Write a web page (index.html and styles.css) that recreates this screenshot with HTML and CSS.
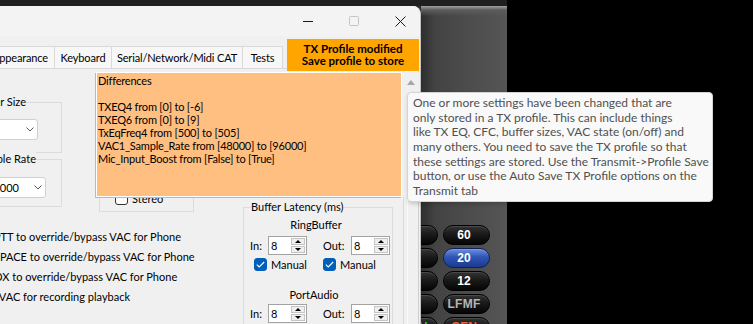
FILE: index.html
```html
<!DOCTYPE html>
<html lang="en">
<head>
    <meta charset="UTF-8">
    <meta name="viewport" content="width=device-width, initial-scale=1.0">
    <title>Setup - TX Profile modified</title>
    <link rel="stylesheet" href="styles.css">
</head>
<body>
    <div class="stage">
        <div class="topband"></div>
        <div class="desk">
            <div class="window">
                <div class="titlebar">
                    <div class="tb-btn">
                        <svg width="10" height="10" viewBox="0 0 10 10"><path d="M0 5.5H10" stroke="#1a1a1a" stroke-width="1"/></svg>
                    </div>
                    <div class="tb-btn">
                        <svg width="10" height="10" viewBox="0 0 10 10"><rect x="0.5" y="0.5" width="9" height="9" rx="1" fill="none" stroke="#c4c4c4"/></svg>
                    </div>
                    <div class="tb-btn">
                        <svg width="11" height="11" viewBox="0 0 11 11"><path d="M0.5 0.5L10.5 10.5M10.5 0.5L0.5 10.5" stroke="#1a1a1a" stroke-width="1"/></svg>
                    </div>
                </div>

                <div class="tabstrip">
                    <div class="tab tab-appearance">Appearance</div>
                    <div class="tab tab-keyboard">Keyboard</div>
                    <div class="tab tab-serial">Serial/Network/Midi CAT</div>
                    <div class="tab tab-tests">Tests</div>
                    <div class="modified">TX Profile modified<br>Save profile to store</div>
                </div>

                <div class="page">
                    <div class="left">
                        <div class="groups">
                            <div class="col-a">
                                <div class="group g-size">
                                    <span class="group-title">Buffer Size</span>
                                    <div class="combo combo-size">
                                        <span class="combo-val">2048</span>
                                        <svg class="chev" width="8" height="5" viewBox="0 0 8 5"><path d="M0.5 0.5L4 4L7.5 0.5" fill="none" stroke="#5a5a5a"/></svg>
                                    </div>
                                </div>
                                <div class="group g-rate">
                                    <span class="group-title">Sample Rate</span>
                                    <div class="combo combo-rate">
                                        <span class="combo-val">96000</span>
                                        <svg class="chev" width="8" height="5" viewBox="0 0 8 5"><path d="M0.5 0.5L4 4L7.5 0.5" fill="none" stroke="#5a5a5a"/></svg>
                                    </div>
                                </div>
                            </div>
                            <div class="group g-stereo">
                                <label class="check">
                                    <span class="box"></span>
                                    <span>Stereo</span>
                                </label>
                            </div>
                        </div>

                        <div class="checks">
                            <label class="check check-row"><span class="box"></span><span>Allow PTT to override/bypass VAC for Phone</span></label>
                            <label class="check check-row"><span class="box"></span><span>Allow SPACE to override/bypass VAC for Phone</span></label>
                            <label class="check check-row check-row-vox"><span class="box"></span><span>Allow VOX to override/bypass VAC for Phone</span></label>
                            <label class="check check-row"><span class="box"></span><span>Enable VAC for recording playback</span></label>
                        </div>
                    </div>

                    <div class="group latency">
                        <span class="group-title">Buffer Latency (ms)</span>
                        <div class="lat-sub">RingBuffer</div>
                        <div class="spin-row">
                            <span class="spin-label">In:</span>
                            <div class="spin"><span class="spin-val">8</span><span class="spin-btns"><span class="spin-up"></span><span class="spin-dn"></span></span></div>
                            <span class="spin-label spin-label-out">Out:</span>
                            <div class="spin"><span class="spin-val">8</span><span class="spin-btns"><span class="spin-up"></span><span class="spin-dn"></span></span></div>
                        </div>
                        <div class="manual-row">
                            <label class="check manual">
                                <span class="box box-on"><svg width="9" height="7" viewBox="0 0 9 7"><path d="M0.8 3.6L3.2 6L8.2 1" fill="none" stroke="#fff" stroke-width="1.1"/></svg></span>
                                <span>Manual</span>
                            </label>
                            <label class="check manual">
                                <span class="box box-on"><svg width="9" height="7" viewBox="0 0 9 7"><path d="M0.8 3.6L3.2 6L8.2 1" fill="none" stroke="#fff" stroke-width="1.1"/></svg></span>
                                <span>Manual</span>
                            </label>
                        </div>
                        <div class="lat-sub lat-sub-pa">PortAudio</div>
                        <div class="spin-row spin-row-pa">
                            <span class="spin-label">In:</span>
                            <div class="spin"><span class="spin-val">8</span><span class="spin-btns"><span class="spin-up"></span><span class="spin-dn"></span></span></div>
                            <span class="spin-label spin-label-out">Out:</span>
                            <div class="spin"><span class="spin-val">8</span><span class="spin-btns"><span class="spin-up"></span><span class="spin-dn"></span></span></div>
                        </div>
                    </div>

                    <div class="rstrip"><div class="rstrip-inner"></div></div>
                </div>
            </div>

            <div class="bandpanel">
                <div class="bands">
                    <div class="band band-o">80</div><div class="band">60</div>
                    <div class="band band-o">30</div><div class="band band-on">20</div>
                    <div class="band band-o">15</div><div class="band">12</div>
                    <div class="band band-o">6</div><div class="band band-grey">LFMF</div>
                    <div class="band band-g">WWV</div><div class="band band-r">GEN</div>
                </div>
            </div>
        </div>

        <div class="diff">
            <div class="diff-text">
                Differences<br>
                <br>
                TXEQ4 from [0] to [-6]<br>
                TXEQ6 from [0] to [9]<br>
                TxEqFreq4 from [500] to [505]<br>
                VAC1_Sample_Rate from [48000] to [96000]<br>
                Mic_Input_Boost from [False] to [True]
            </div>
            <div class="diff-scroll"><span class="arrow-up"></span></div>
        </div>

        <div class="tip">
            One or more settings have been changed that are<br>
            only stored in a TX profile. This can include things<br>
            like TX EQ, CFC, buffer sizes, VAC state (on/off) and<br>
            many others. You need to save the TX profile so that<br>
            these settings are stored. Use the Transmit-&gt;Profile Save<br>
            button, or use the Auto Save TX Profile options on the<br>
            Transmit tab
        </div>
    </div>
</body>
</html>
```

FILE: styles.css
```css
* {
    margin: 0;
    padding: 0;
    box-sizing: border-box;
}

body {
    background: #000;
    font-family: Lato, "Liberation Sans", sans-serif;
    font-size: 11px;
    color: #000;
}

.stage {
    position: relative;
    width: 753px;
    height: 324px;
    overflow: hidden;
}

.topband {
    width: 507px;
    height: 6px;
    background: #1f1f1f;
}

.desk {
    display: flex;
    width: 507px;
    height: 318px;
    background: #2a2a2a;
}

/* dialog window */
.window {
    width: 421px;
    height: 318px;
    flex-shrink: 0;
    display: flex;
    flex-direction: column;
    background: #f0f0f0;
    border-right: 1px solid #c2c2c2;
    border-top-right-radius: 8px;
    overflow: hidden;
}

.titlebar {
    height: 30px;
    flex-shrink: 0;
    display: flex;
    justify-content: flex-end;
    margin-right: -3px;
    background: #f3f3f3;
}

.tb-btn {
    width: 46px;
    display: flex;
    align-items: center;
    justify-content: center;
}

.tabstrip {
    height: 33px;
    flex-shrink: 0;
    display: flex;
    align-items: flex-end;
    border-bottom: 1px solid #d9d9d9;
}

.tab {
    height: 22px;
    display: flex;
    align-items: center;
    justify-content: center;
    flex-shrink: 0;
    white-space: nowrap;
    letter-spacing: -0.15px;
    background: #f7f7f7;
    border-top: 1px solid #d9d9d9;
    border-right: 1px solid #d9d9d9;
}

.tab-appearance { width: 69px; margin-left: -14px; }
.tab-keyboard { width: 57px; }
.tab-serial { width: 131px; }
.tab-tests { width: 40px; }

.modified {
    position: relative;
    z-index: 1;
    align-self: flex-start;
    flex-shrink: 0;
    width: 132px;
    height: 32px;
    margin: 3px 0 0 4px;
    display: flex;
    flex-direction: column;
    justify-content: center;
    text-align: center;
    font-size: 11.5px;
    line-height: 12.5px;
    font-weight: 700;
    background: #ffa500;
}

/* tab page */
.page {
    flex: 1;
    display: flex;
}

.left {
    width: 243px;
    flex-shrink: 0;
}

.groups {
    display: flex;
    align-items: flex-start;
    padding-top: 33px;
}

.col-a {
    width: 62px;
    flex-shrink: 0;
}

.group {
    position: relative;
    border: 1px solid #dcdcdc;
    flex-shrink: 0;
}

.group-title {
    position: absolute;
    top: -8px;
    line-height: 14px;
    white-space: nowrap;
    background: #f0f0f0;
}

.g-size {
    width: 100px;
    height: 51px;
    margin-left: -38px;
    padding: 16px 0 0 6px;
}

.g-size .group-title { right: 35px; }

.g-rate {
    width: 96px;
    height: 48px;
    margin-left: -34px;
    margin-top: 6px;
    padding: 17px 0 0 6px;
}

.g-rate .group-title { right: 25px; }

.combo {
    height: 21px;
    display: flex;
    align-items: center;
    background: #fff;
    border: 1px solid #cfcfcf;
    border-radius: 3px;
    padding: 0 3px 0 4px;
}

.combo-val {
    flex: 1;
    white-space: nowrap;
}

.combo-size { width: 69px; }
.combo-size .combo-val { visibility: hidden; }
.combo-rate { width: 73px; padding-left: 13px; }

.g-stereo {
    width: 95px;
    height: 110px;
    margin-left: 37px;
    padding: 89px 0 0 15px;
}

.check {
    display: flex;
    align-items: center;
    gap: 4px;
    white-space: nowrap;
}

.box {
    width: 13px;
    height: 13px;
    flex-shrink: 0;
    display: flex;
    align-items: center;
    justify-content: center;
    background: #fff;
    border: 1px solid #333;
    border-radius: 3px;
}

.box-on {
    background: #005fb8;
    border-color: #005fb8;
}

.checks {
    margin-top: 14px;
}

.check-row {
    height: 20px;
    margin-left: -53px;
}

.check-row-vox {
    margin-left: -60px;
}

/* buffer latency */
.latency {
    width: 150px;
    height: 140px;
    margin-top: 138px;
    padding: 8px 0 0 6px;
}

.latency .group-title { left: 7px; }

.lat-sub {
    width: 132px;
    line-height: 18px;
    text-align: center;
}

.lat-sub-pa {
    width: 128px;
    margin-top: 15px;
}

.spin-row {
    height: 19px;
    margin-top: 2px;
    display: flex;
    align-items: center;
}

.spin-row-pa {
    margin-top: 0;
}

.spin-label {
    width: 18px;
    flex-shrink: 0;
}

.spin-label-out {
    width: 28px;
    margin-left: 16px;
}

.spin {
    width: 39px;
    height: 19px;
    flex-shrink: 0;
    display: flex;
    background: #fff;
    border: 1px solid #a3a3a3;
}

.spin-val {
    flex: 1;
    padding-left: 2px;
    line-height: 17px;
}

.spin-btns {
    width: 15px;
    display: flex;
    flex-direction: column;
    gap: 1px;
    padding: 1px 1px 1px 0;
}

.spin-up, .spin-dn {
    flex: 1;
    display: flex;
    align-items: center;
    justify-content: center;
    background: #efefef;
    border: 1px solid #c4c4c4;
}

.spin-up::before, .spin-dn::before {
    content: "";
    border-left: 3px solid transparent;
    border-right: 3px solid transparent;
}

.spin-up::before { border-bottom: 3px solid #000; }
.spin-dn::before { border-top: 3px solid #000; }

.manual-row {
    height: 14px;
    margin: 2px 0 0 4px;
    display: flex;
}

.manual {
    width: 73px;
}

.rstrip {
    flex: 1;
    margin-left: 10px;
    border-left: 1px solid #dadada;
    padding-left: 3px;
}

.rstrip-inner {
    height: 100%;
    border-left: 1px solid #fafafa;
    border-right: 1px solid #cfcfcf;
    width: 12px;
}

/* band buttons panel */
.bandpanel {
    width: 86px;
    height: 318px;
    flex-shrink: 0;
    overflow: hidden;
    padding-top: 219px;
    background:
        linear-gradient(180deg, #a0a0a0 0, #5c5c5c 4px, rgba(80, 80, 80, 0) 10px),
        linear-gradient(90deg, #2e2e2e 0, #434343 14px, #4b4b4b 50%, #555 100%);
}

.bands {
    display: grid;
    grid-template-columns: 47px 47px;
    column-gap: 5px;
    row-gap: 3px;
    margin-left: -30px;
}

.band {
    height: 20px;
    padding-right: 5px;
    display: flex;
    align-items: center;
    justify-content: center;
    font-family: "Liberation Sans", Arial, sans-serif;
    font-size: 12px;
    font-weight: 700;
    color: #fff;
    background: linear-gradient(180deg, #343434 0, #1a1a1a 45%, #050505 100%);
    border: 1px solid #000;
    border-radius: 10px;
    box-shadow: inset 0 1px 0 rgba(255, 255, 255, 0.12);
}

.band-on {
    background: linear-gradient(180deg, #6d8fe0 0, #2f55b5 45%, #1b3a8e 100%);
    border-color: #0d2258;
}

.band-o { color: #e59a3a; }
.band-g { color: #3fbf3f; }
.band-r { color: #f0603a; }
.band-grey { color: #b5b5b5; letter-spacing: 0.3px; }

/* overlays */
.diff {
    position: absolute;
    left: 96px;
    top: 72px;
    display: flex;
}

.diff-text {
    width: 306px;
    height: 125px;
    padding: 1px 1px 0 1px;
    line-height: 13px;
    letter-spacing: -0.2px;
    white-space: nowrap;
    background: #ffbf80;
    border: 1px solid #fff;
    box-shadow: -1px 1px 0 #b9b9b9;
}

.diff-scroll {
    width: 18px;
    height: 125px;
    display: flex;
    justify-content: center;
    padding-top: 8px;
    background: #f0f0f0;
}

.arrow-up {
    width: 0;
    height: 0;
    border-left: 4px solid transparent;
    border-right: 4px solid transparent;
    border-bottom: 5px solid #a6a6a6;
}

.tip {
    position: absolute;
    left: 407px;
    top: 92px;
    width: 306px;
    height: 110px;
    padding: 3px 5px 0 5px;
    font-size: 12px;
    line-height: 14.67px;
    white-space: nowrap;
    color: #505050;
    background: #f9f9f9;
    border: 1px solid #d4d4d4;
    border-radius: 4px;
    box-shadow: 1px 2px 4px rgba(0, 0, 0, 0.18);
}
```
